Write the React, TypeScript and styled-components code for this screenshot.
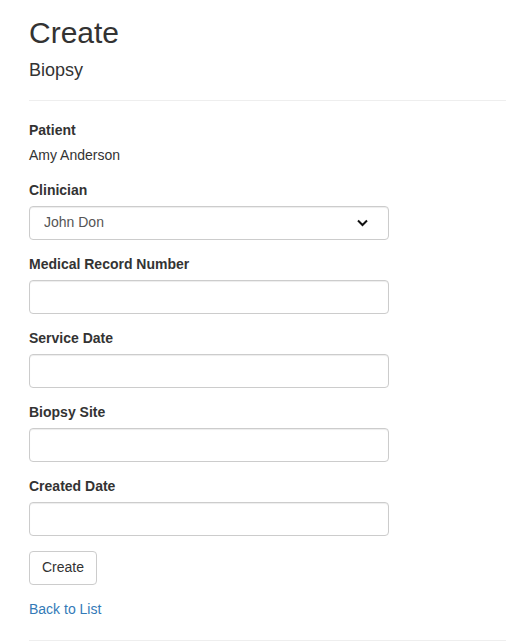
import styled, { createGlobalStyle } from 'styled-components';

const GlobalStyle = createGlobalStyle`
  html, body {
    margin: 0;
    padding: 0;
    background: #fff;
  }
  body {
    font-family: "Liberation Sans", Arial, Helvetica, sans-serif;
    font-size: 14px;
    line-height: 1.42857;
    color: #333;
  }
  * { box-sizing: border-box; }
`;

const Page = styled.div`
  padding: 0 0 0 29px;
`;

const Title = styled.h2`
  margin: 16px 0 0 0;
  font-size: 30px;
  font-weight: 500;
  line-height: 33px;
`;

const Subtitle = styled.h4`
  margin: 11px 0 0 0;
  font-size: 18px;
  font-weight: 500;
  line-height: 20px;
`;

const Rule = styled.hr`
  margin: 20px 0 20px 0;
  border: 0;
  border-top: 1px solid #eee;
`;

const FormGroup = styled.div`
  margin-bottom: 15px;
  width: 360px;
`;

const Label = styled.label`
  display: block;
  font-weight: 700;
  margin-bottom: 7px;
  line-height: 18px;
`;

const Value = styled.div`
  line-height: 18px;
  padding-bottom: 2px;
`;

const Input = styled.input`
  display: block;
  width: 100%;
  height: 34px;
  padding: 6px 12px;
  font: inherit;
  color: #555;
  background: #fff;
  border: 1px solid #ccc;
  border-radius: 4px;
  box-shadow: inset 0 1px 1px rgba(0, 0, 0, 0.075);
  outline: none;
`;

const SelectWrap = styled.div`
  position: relative;
`;

const Select = styled.select`
  display: block;
  width: 100%;
  height: 34px;
  padding: 6px 12px 6px 14px;
  font: inherit;
  color: #555;
  background: #fff;
  border: 1px solid #ccc;
  border-radius: 4px;
  box-shadow: inset 0 1px 1px rgba(0, 0, 0, 0.075);
  appearance: none;
  -webkit-appearance: none;
  outline: none;
`;

const Chevron = styled.svg`
  position: absolute;
  right: 21px;
  top: 13px;
  pointer-events: none;
`;

const Button = styled.button`
  display: inline-block;
  height: 34px;
  padding: 6px 12px;
  font: inherit;
  color: #333;
  background: #fff;
  border: 1px solid #ccc;
  border-radius: 4px;
  cursor: pointer;
`;

const BackLink = styled.a`
  display: inline-block;
  margin-top: 14px;
  color: #337ab7;
  text-decoration: none;
  line-height: 20px;
`;

const FooterRule = styled(Rule)`
  margin-top: 20px;
`;

const fields = ['Medical Record Number', 'Service Date', 'Biopsy Site', 'Created Date'];

export default function App() {
  return (
    <Page>
      <GlobalStyle />
      <Title>Create</Title>
      <Subtitle>Biopsy</Subtitle>
      <Rule />
      <FormGroup>
        <Label>Patient</Label>
        <Value>Amy Anderson</Value>
      </FormGroup>
      <FormGroup>
        <Label>Clinician</Label>
        <SelectWrap>
          <Select defaultValue="john">
            <option value="john">John Don</option>
          </Select>
          <Chevron width="11" height="8" viewBox="0 0 11 8">
            <path d="M1 1.5 L5.5 6 L10 1.5" fill="none" stroke="#111" strokeWidth="2" />
          </Chevron>
        </SelectWrap>
      </FormGroup>
      {fields.map((f) => (
        <FormGroup key={f}>
          <Label>{f}</Label>
          <Input type="text" />
        </FormGroup>
      ))}
      <Button>Create</Button>
      <div>
        <BackLink href="#">Back to List</BackLink>
      </div>
      <FooterRule />
    </Page>
  );
}
